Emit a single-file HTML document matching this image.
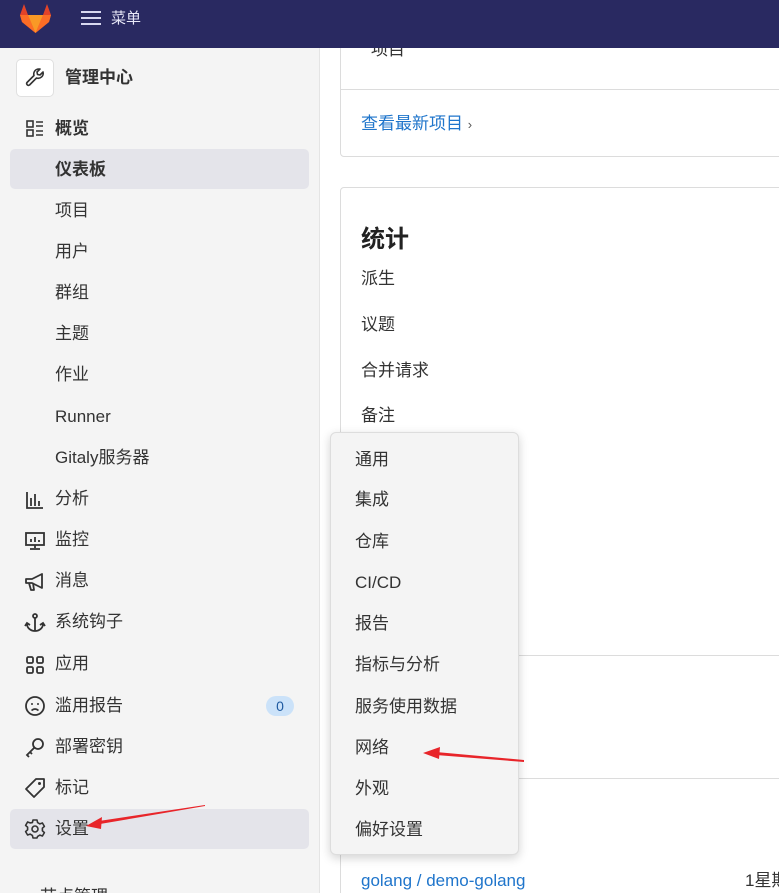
<!DOCTYPE html>
<html><head><meta charset="utf-8"><style>
*{margin:0;padding:0;box-sizing:border-box}
html,body{width:779px;height:893px;overflow:hidden}
body{background:#fff;font-family:"Liberation Sans","Noto Sans CJK SC",sans-serif;color:#333;position:relative}
.hdr{position:absolute;left:0;top:0;width:779px;height:48px;background:#292961}
.side{position:absolute;left:0;top:48px;width:320px;height:845px;background:#f4f4f4;border-right:1px solid #e4e4e4;overflow:hidden}
.t{position:absolute;font-size:17px;line-height:20px;white-space:nowrap}
.ic{position:absolute;left:24px;width:22px;height:22px}
.card{position:absolute;left:340px;width:460px;border:1px solid #dcdcdc;border-radius:4px;background:#fff}
.dd{position:absolute;left:330px;top:432px;width:189px;height:423px;background:#f4f4f4;border:1px solid #ddd;border-radius:6px;box-shadow:0 3px 10px rgba(0,0,0,.18)}
</style></head><body>
<div class="card" style="top:20px;height:137px"><div style="position:absolute;left:0;right:0;top:68px;border-top:1px solid #dcdcdc"></div>
<div class="t" style="left:30px;top:19px">项目</div>
<div class="t" style="left:20px;top:93px;color:#1f75cb">查看最新项目 <span style="color:#555;font-size:13px">›</span></div></div>
<div class="card" style="top:187px;height:720px">
<div class="t" style="left:20px;top:38px;font-size:24px;line-height:28px;font-weight:bold;color:#222">统计</div>
<div class="t" style="left:20px;top:81px">派生</div>
<div class="t" style="left:20px;top:127px">议题</div>
<div class="t" style="left:20px;top:173px">合并请求</div>
<div class="t" style="left:20px;top:218px">备注</div>
<div style="position:absolute;left:0;right:0;top:467px;border-top:1px solid #dcdcdc"></div>
<div style="position:absolute;left:0;right:0;top:590px;border-top:1px solid #dcdcdc"></div>
<div class="t" style="left:20px;top:683px;color:#1f75cb">golang / demo-golang</div>
<div class="t" style="left:404px;top:683px">1星期</div>
</div>
<div class="hdr">
<svg style="position:absolute;left:19px;top:3px" width="33" height="31" viewBox="0 0 33 31"><path d="M16.5 30 L3 19 L1 12 L5 1 L9 12 L24 12 L28 1 L32 12 L30 19Z" fill="#e24329"/><path d="M16.5 30 L3 19 L1 12 L9 12Z" fill="#fc6d26"/><path d="M16.5 30 L30 19 L32 12 L24 12Z" fill="#fc6d26"/><path d="M16.5 30 L9 12 L24 12Z" fill="#fca326" opacity=".9"/></svg>
<div style="position:absolute;left:81px;top:11px;width:20px;height:2px;background:#d8d8f0;box-shadow:0 6px 0 #d8d8f0,0 12px 0 #d8d8f0"></div>
<div class="t" style="left:111px;top:9px;color:#e8e8f8;font-size:15px">菜单</div>
</div>
<div class="side">
<div style="position:absolute;left:16px;top:11px;width:38px;height:38px;background:#fff;border:1px solid #e0e0e0;border-radius:5px"><svg width="36" height="36" viewBox="0 0 36 36"><path d="M22 9a5 5 0 0 0-5 6.5L10 22.5a1.8 1.8 0 0 0 2.5 2.5l7-7A5 5 0 0 0 26 12l-3 3-2.5-.5-.5-2.5 3-3z" fill="none" stroke="#333" stroke-width="1.6" stroke-linejoin="round"/></svg></div>
<div class="t" style="left:65px;top:20px;font-weight:bold">管理中心</div>
<svg class="ic" style="top:70px" viewBox="0 0 22 22"><rect x="3" y="3" width="6" height="6" fill="none" stroke="#333" stroke-width="1.6"/><rect x="3" y="12" width="6" height="6" fill="none" stroke="#333" stroke-width="1.6"/><path d="M12 4h7M12 8h7M12 13h7M12 17h7" stroke="#333" stroke-width="1.6"/></svg>
<div class="t" style="left:55px;top:71px;font-weight:bold">概览</div>
<div style="position:absolute;left:10px;top:101px;width:299px;height:40px;background:#e4e4ea;border-radius:5px"></div>
<div class="t" style="left:55px;top:112px;font-weight:bold">仪表板</div>
<div class="t" style="left:55px;top:153px">项目</div>
<div class="t" style="left:55px;top:194px">用户</div>
<div class="t" style="left:55px;top:235px">群组</div>
<div class="t" style="left:55px;top:276px">主题</div>
<div class="t" style="left:55px;top:317px">作业</div>
<div class="t" style="left:55px;top:359px">Runner</div>
<div class="t" style="left:55px;top:400px">Gitaly服务器</div>
<svg class="ic" style="top:441px" viewBox="0 0 22 22"><path d="M3 3v16h16M7 17V9M11 17V5M15 17v-5" stroke="#333" stroke-width="1.8" fill="none"/></svg>
<div class="t" style="left:55px;top:441px">分析</div>
<svg class="ic" style="top:482px" viewBox="0 0 22 22"><rect x="2" y="3" width="18" height="12" fill="none" stroke="#333" stroke-width="1.8"/><path d="M7 12V9M11 12V7M15 12v-2M11 15v3M6 19h10" stroke="#333" stroke-width="1.8"/></svg>
<div class="t" style="left:55px;top:482px">监控</div>
<svg class="ic" style="top:523px" viewBox="0 0 22 22"><path d="M2 8h6l10-5v14L8 12H2zM5 12l2 7h3l-1-7" fill="none" stroke="#333" stroke-width="1.8" stroke-linejoin="round"/></svg>
<div class="t" style="left:55px;top:523px">消息</div>
<svg class="ic" style="top:564px" viewBox="0 0 22 22"><circle cx="11" cy="4" r="2" fill="none" stroke="#333" stroke-width="1.8"/><path d="M11 6v13M3 12a8 7 0 0 0 16 0M1 14l2-3 3 2M21 14l-2-3-3 2" fill="none" stroke="#333" stroke-width="1.8"/></svg>
<div class="t" style="left:55px;top:564px">系统钩子</div>
<svg class="ic" style="top:606px" viewBox="0 0 22 22"><g fill="none" stroke="#333" stroke-width="1.8"><rect x="3" y="3" width="6" height="6" rx="1.5"/><rect x="13" y="3" width="6" height="6" rx="1.5"/><rect x="3" y="13" width="6" height="6" rx="1.5"/><rect x="13" y="13" width="6" height="6" rx="1.5"/></g></svg>
<div class="t" style="left:55px;top:606px">应用</div>
<svg class="ic" style="top:647px" viewBox="0 0 22 22"><circle cx="11" cy="11" r="9" fill="none" stroke="#333" stroke-width="1.8"/><circle cx="8" cy="9" r="1" fill="#333"/><circle cx="14" cy="9" r="1" fill="#333"/><path d="M7.5 15.5q3.5-3 7 0" fill="none" stroke="#333" stroke-width="1.6"/></svg>
<div class="t" style="left:55px;top:648px">滥用报告</div>
<div style="position:absolute;left:266px;top:648px;width:28px;height:20px;border-radius:10px;background:#cbe2f9;color:#1f5aa0;font-size:14px;text-align:center;line-height:20px">0</div>
<svg class="ic" style="top:688px" viewBox="0 0 22 22"><circle cx="14" cy="8" r="5" fill="none" stroke="#333" stroke-width="1.8"/><path d="M10.5 11.5L3 19l2 2M6 16l2 2" fill="none" stroke="#333" stroke-width="1.8"/></svg>
<div class="t" style="left:55px;top:689px">部署密钥</div>
<svg class="ic" style="top:729px" viewBox="0 0 22 22"><path d="M12 2h8v8l-10 10-8-8z" fill="none" stroke="#333" stroke-width="1.8" stroke-linejoin="round"/><circle cx="15.5" cy="6.5" r="1.5" fill="#333"/></svg>
<div class="t" style="left:55px;top:730px">标记</div>
<div style="position:absolute;left:10px;top:761px;width:299px;height:40px;background:#e4e4ea;border-radius:5px"></div>
<svg class="ic" style="top:770px" viewBox="0 0 22 22"><path d="M9 2h4l.6 2.6 2.3 1.3 2.5-.9 2 3.4-2 1.8v2.6l2 1.8-2 3.4-2.5-.9-2.3 1.3L13 20H9l-.6-2.6-2.3-1.3-2.5.9-2-3.4 2-1.8V9.2l-2-1.8 2-3.4 2.5.9L8.4 4.6z" fill="none" stroke="#333" stroke-width="1.6" stroke-linejoin="round"/><circle cx="11" cy="11" r="3" fill="none" stroke="#333" stroke-width="1.6"/></svg>
<div class="t" style="left:55px;top:771px">设置</div>
<div class="t" style="left:40px;top:839px">节点管理</div>
</div>
<div class="dd">
<div class="t" style="left:24px;top:17px">通用</div>
<div class="t" style="left:24px;top:57px">集成</div>
<div class="t" style="left:24px;top:99px">仓库</div>
<div class="t" style="left:24px;top:140px">CI/CD</div>
<div class="t" style="left:24px;top:181px">报告</div>
<div class="t" style="left:24px;top:222px">指标与分析</div>
<div class="t" style="left:24px;top:264px">服务使用数据</div>
<div class="t" style="left:24px;top:305px">网络</div>
<div class="t" style="left:24px;top:346px">外观</div>
<div class="t" style="left:24px;top:387px">偏好设置</div>
</div>
<svg style="position:absolute;left:0;top:0" width="779" height="893"><g fill="#e8252a"><path d="M205 806 L100 824 L99 821 L205 805Z"/><path d="M86 826 L102 817 L101 829Z"/><path d="M524 762 L436 755 L436 752 L524 760Z"/><path d="M423 753 L440 747 L439 759Z"/></g></svg>
</body></html>
